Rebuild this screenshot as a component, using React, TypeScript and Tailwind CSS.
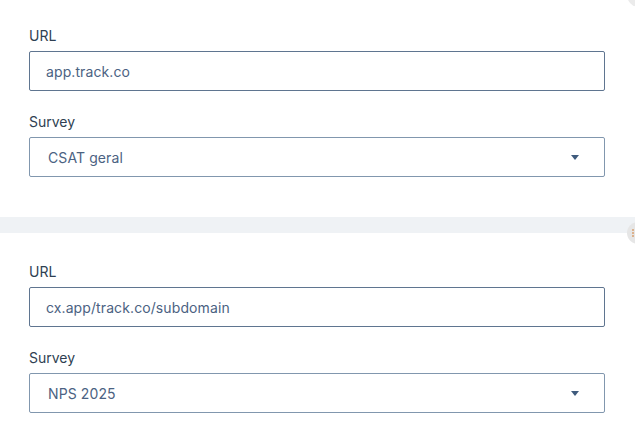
import React from "react";

function Caret() {
  return (
    <svg width="8" height="5" viewBox="0 0 8 5" className="block">
      <path d="M0 0 H8 L4 5 Z" fill="#3f5b7d" />
    </svg>
  );
}

function Section({ url, survey, pt }: { url: string; survey: string; pt: string }) {
  return (
    <div className={`px-[29px] ${pt} pb-[40px] bg-white`}>
      <div className="text-[14px] leading-[20px] text-[#2f3f52] mb-[5px]">URL</div>
      <div className="w-[576px] h-[40px] border border-[#5f7590] rounded-[2px] flex items-center pl-[16px] text-[14px] tracking-[0.1px] text-[#4b6282]">
        {url}
      </div>
      <div className="text-[14px] leading-[20px] text-[#2f3f52] mt-[21px] mb-[5px]">Survey</div>
      <div className="w-[576px] h-[40px] border border-[#8197ae] rounded-[2px] flex items-center justify-between pl-[18px] pr-[25px] text-[14px] tracking-[0.1px] text-[#4b6282]">
        <span>{survey}</span>
        <Caret />
      </div>
    </div>
  );
}

export default function App() {
  return (
    <div
      className="relative w-[635px] h-[448px] overflow-hidden bg-white"
      style={{ fontFamily: "Inter, 'Noto Sans', sans-serif" }}
    >
      <Section url="app.track.co" survey="CSAT geral" pt="pt-[26px]" />
      <div className="h-[16px] bg-[#eff2f5]" />
      <Section url="cx.app/track.co/subdomain" survey="NPS 2025" pt="pt-[29px]" />
      <div className="absolute left-[627px] top-[-17px] w-[24px] h-[24px] rounded-full bg-[#ebebeb]" />
      <div className="absolute left-[627px] top-[222px] w-[22px] h-[22px] rounded-full bg-[#e6e6e6]">
        <svg width="22" height="22" viewBox="0 0 22 22" className="block">
          <circle cx="6" cy="8" r="1" fill="#d8a070" />
          <circle cx="6" cy="11" r="1" fill="#d8a070" />
          <circle cx="6" cy="14" r="1" fill="#d8a070" />
        </svg>
      </div>
    </div>
  );
}
